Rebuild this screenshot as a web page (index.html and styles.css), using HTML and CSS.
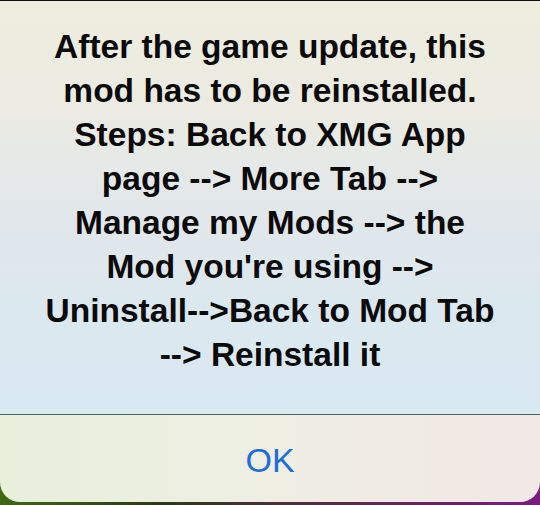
FILE: index.html
```html
<!DOCTYPE html>
<html lang="en">
<head>
    <meta charset="UTF-8">
    <meta name="viewport" content="width=device-width, initial-scale=1.0">
    <title>Alert</title>

    <link rel="stylesheet" href="styles.css">
</head>
<body>
    <div class="alert">
        <div class="message">
            <p>After the game update, this<br>
            mod has to be reinstalled.<br>
            Steps: Back to XMG App<br>
            page --&gt; More Tab --&gt;<br>
            Manage my Mods --&gt; the<br>
            Mod you're using --&gt;<br>
            Uninstall--&gt;Back to Mod Tab<br>
            --&gt; Reinstall it</p>
        </div>
        <div class="actions">
            <button class="ok">OK</button>
        </div>
    </div>
</body>
</html>
```

FILE: styles.css
```css
html, body{
    margin: 0;
    height: 100%;
}

body{
    background: linear-gradient(90deg, #3f6a12 0%, #2b3a14 30%, #5a2a4a 60%, #7c1a80 100%);
    font-family: "Liberation Sans", Arial, sans-serif;
    overflow: hidden;
}

.alert{
    height: 501px;
    border-top: 1px solid #111;
    border-radius: 0 0 20px 20px;
    overflow: hidden;
    display: flex;
    flex-direction: column;
}

.message{
    height: 414px;
    box-sizing: border-box;
    padding-top: 24px;
    border-bottom: 1px solid #4a625e;
    background: linear-gradient(180deg, #efeddf 0%, #ebebe2 25%, #e2e7ea 50%, #dbe8ef 75%, #d9e9f2 100%);
}

.message p{
    margin: 0;
    text-align: center;
    font-size: 33.5px;
    font-weight: bold;
    line-height: 44px;
    color: #0a0a0a;
}

.actions{
    flex: 1;
    display: flex;
    align-items: center;
    justify-content: center;
    background: linear-gradient(90deg, #e8efdb 0%, #edefe2 40%, #f0ebe4 75%, #f1e8e5 100%);
}

.ok{
    border: none;
    background: none;
    padding: 0;
    font-family: "Liberation Sans", Arial, sans-serif;
    font-size: 34px;
    color: #1b6ddc;
    margin-top: 4px;
}
```
